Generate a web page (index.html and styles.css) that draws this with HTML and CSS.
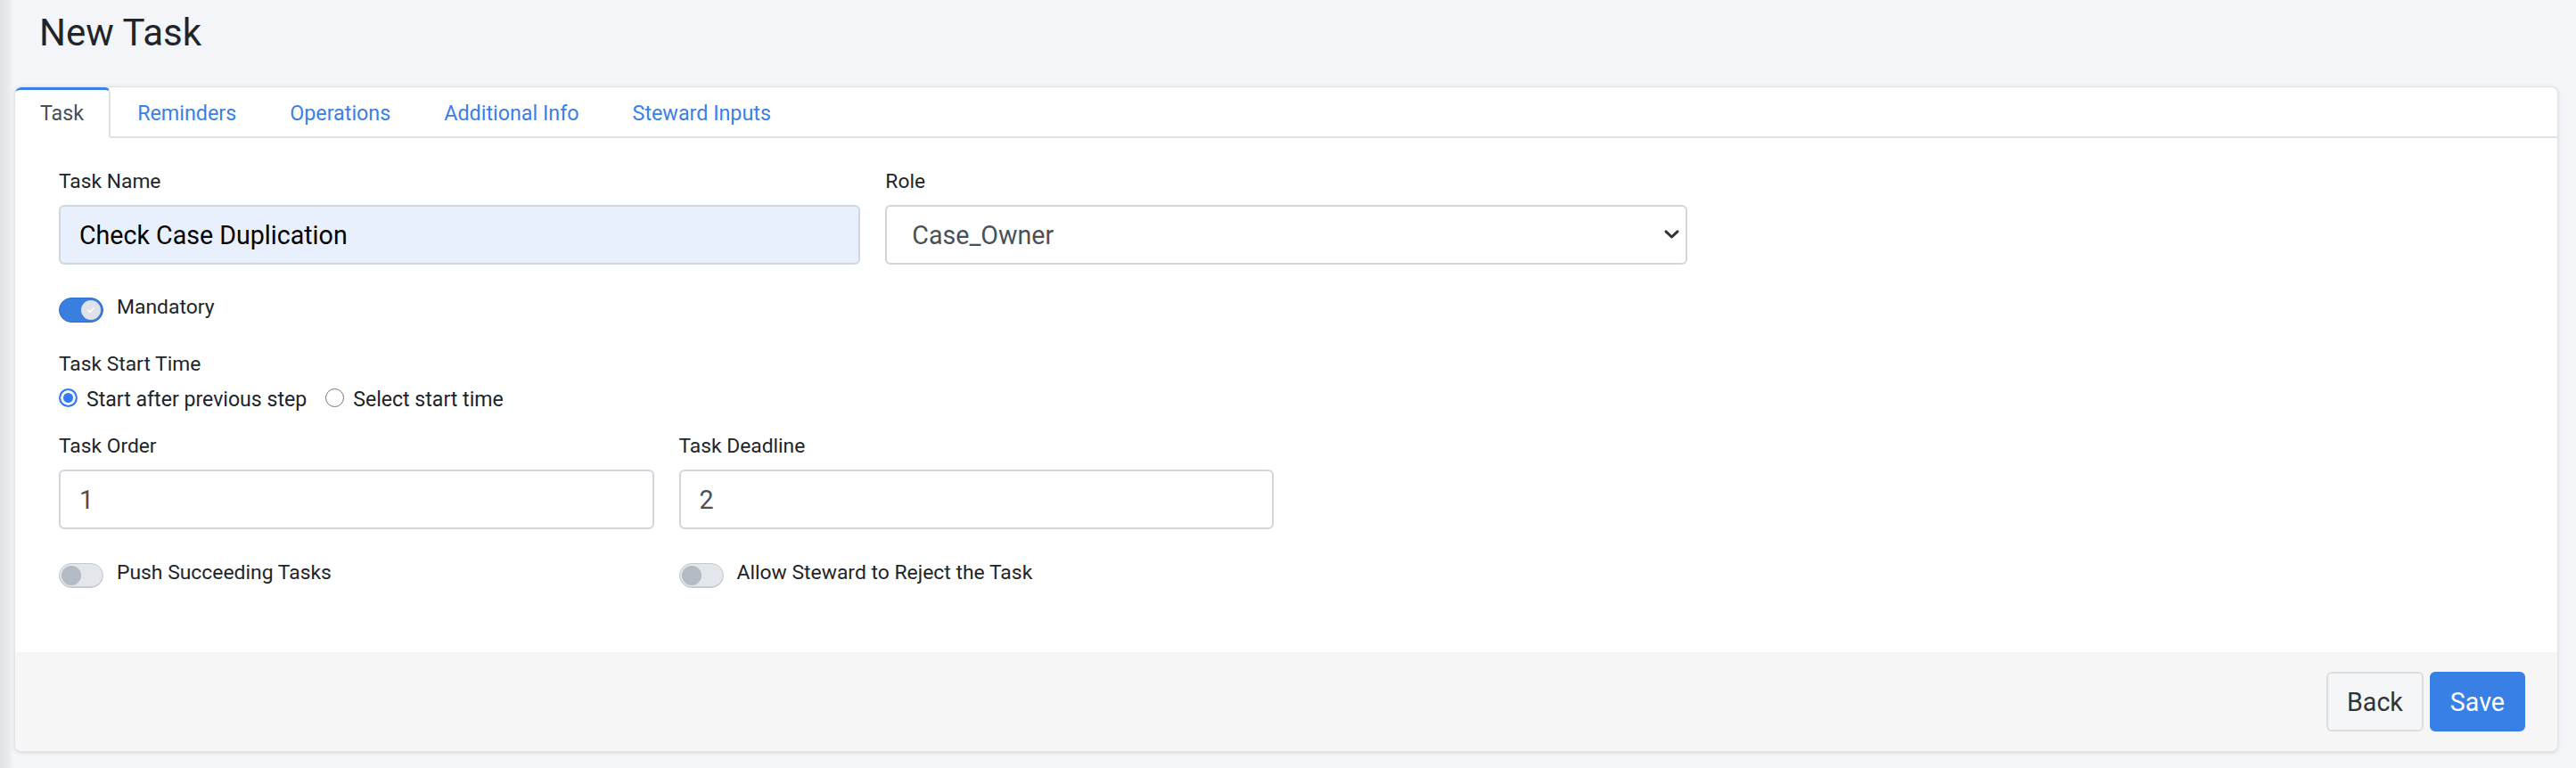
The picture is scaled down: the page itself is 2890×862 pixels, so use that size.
FILE: index.html
```html
<!DOCTYPE html>
<html lang="en">
<head>
<meta charset="utf-8">
<title>New Task</title>
<link rel="stylesheet" href="styles.css">
</head>
<body>
<div class="page">
  <h1 class="page-title">New Task</h1>
  <div class="card">
    <ul class="tabs">
      <li class="tab active">Task</li>
      <li class="tab">Reminders</li>
      <li class="tab">Operations</li>
      <li class="tab">Additional Info</li>
      <li class="tab">Steward Inputs</li>
    </ul>
    <div class="card-body">
      <div class="row">
        <div class="field span-4">
          <label class="label">Task Name</label>
          <input class="control autofill" type="text" value="Check Case Duplication">
        </div>
        <div class="field span-4">
          <label class="label">Role</label>
          <div class="select-wrap">
            <select class="control select"><option>Case_Owner</option></select>
            <svg class="chevron" width="19" height="12" viewBox="0 0 19 12"><path d="M3 2.8 L9.5 9 L16 2.8" fill="none" stroke="#333" stroke-width="3" stroke-linecap="round" stroke-linejoin="round"/></svg>
          </div>
        </div>
      </div>

      <div class="switch-row mandatory">
        <span class="switch on"><span class="knob"><svg width="12" height="12" viewBox="0 0 12 12"><path d="M3 6.3 L5.1 8.4 L9 3.8" fill="none" stroke="#ffffff" stroke-width="1.6" stroke-linecap="round" stroke-linejoin="round"/></svg></span></span>
        <span class="switch-label">Mandatory</span>
      </div>

      <div class="label start-label">Task Start Time</div>
      <div class="radios">
        <label class="radio-item"><input class="radio" type="radio" name="start" checked><span>Start after previous step</span></label>
        <label class="radio-item second"><input class="radio" type="radio" name="start"><span>Select start time</span></label>
      </div>

      <div class="row order-row">
        <div class="field span-3">
          <label class="label">Task Order</label>
          <input class="control" type="text" value="1">
        </div>
        <div class="field span-3">
          <label class="label">Task Deadline</label>
          <input class="control" type="text" value="2">
        </div>
      </div>

      <div class="row toggles-row">
        <div class="span-3 switch-row">
          <span class="switch off"><span class="knob"></span></span>
          <span class="switch-label">Push Succeeding Tasks</span>
        </div>
        <div class="span-3 switch-row">
          <span class="switch off"><span class="knob"></span></span>
          <span class="switch-label">Allow Steward to Reject the Task</span>
        </div>
      </div>
    </div>
    <div class="card-footer">
      <button class="btn btn-back" type="button">Back</button>
      <button class="btn btn-save" type="button">Save</button>
    </div>
  </div>
</div>
</body>
</html>
```

FILE: styles.css
```css
html, body {
  margin: 0;
  padding: 0;
}

body {
  width: 2890px;
  height: 862px;
  overflow: hidden;
  font-family: Roboto, "Liberation Sans", Arial, sans-serif;
  color: #212529;
  background: linear-gradient(to right, #e1e2e6 0px, #e9eaee 9px, #f4f5f9 15px, #f4f5f9 100%);
}

.page {
  padding: 12px 20px 0 16px;
}

.page-title {
  margin: 0 0 35px 0;
  padding-left: 28px;
  font-size: 42px;
  line-height: 50px;
  font-weight: 400;
  color: #212529;
}

.card {
  background: #ffffff;
  border: 1px solid #e2e4e8;
  border-radius: 8px;
  box-shadow: 0 1px 4px rgba(0, 0, 0, 0.12);
  overflow: hidden;
}

/* Tabs */
.tabs {
  display: flex;
  list-style: none;
  margin: 0;
  padding: 0;
  border-bottom: 2px solid #dee2e6;
}

.tab {
  height: 52px;
  line-height: 52px;
  padding: 0 28px;
  font-size: 23.3px;
  color: #3a80e6;
  border-top: 3px solid transparent;
  border-left: 2px solid transparent;
  border-right: 2px solid transparent;
  border-bottom: 2px solid transparent;
  margin-bottom: -2px;
  white-space: nowrap;
}

.tab.active {
  color: #495057;
  background: #ffffff;
  border-top-color: #3a80e6;
  border-right-color: #dee2e6;
  border-bottom-color: #ffffff;
  border-left-width: 0;
  border-top-left-radius: 6px;
  border-top-right-radius: 6px;
}

/* Body */
.card-body {
  padding: 32px 49px 72px 49px;
}

.row {
  display: grid;
  grid-template-columns: repeat(12, minmax(0, 1fr));
  column-gap: 28px;
}

.span-4 {
  grid-column: span 4;
}

.span-3 {
  grid-column: span 3;
}

.label {
  display: block;
  font-size: 22.8px;
  line-height: 33px;
  color: #212529;
}

.field .label {
  margin-bottom: 10px;
}

.control {
  display: block;
  width: 100%;
  height: 67px;
  box-sizing: border-box;
  border: 2px solid #d1d6dc;
  border-radius: 6px;
  padding: 0 21px;
  font-family: Roboto, "Liberation Sans", Arial, sans-serif;
  font-size: 28.6px;
  color: #495057;
  background: #ffffff;
  outline: none;
}

.control.autofill {
  background: #e8f0fe;
  color: #000000;
}

.select-wrap {
  position: relative;
}

.select {
  -webkit-appearance: none;
  appearance: none;
  padding-left: 28px;
}

.chevron {
  position: absolute;
  right: 8px;
  top: 27px;
}

/* Switches */
.switch-row {
  display: flex;
  align-items: flex-start;
}

.mandatory {
  margin-top: 31px;
}

.switch {
  flex-shrink: 0;
  width: 50px;
  height: 28px;
  margin-top: 6px;
  box-sizing: border-box;
  border-radius: 14px;
  padding: 2px;
  display: flex;
  align-items: center;
}

.switch .knob {
  width: 22px;
  height: 22px;
  border-radius: 50%;
  display: flex;
  align-items: center;
  justify-content: center;
}

.switch.on {
  background: #3a7fe0;
  border: 1px solid #2d6bc9;
  justify-content: flex-end;
}

.switch.on .knob {
  background: #dfe2e8;
}

.switch.off {
  background: #e3e6ea;
  border: 1px solid #c4c9d0;
  justify-content: flex-start;
  box-shadow: inset 0 -1px 0 #c9ced5;
}

.switch.off .knob {
  background: #b4bac3;
}

.switch-label {
  margin-left: 15px;
  font-size: 22.9px;
  line-height: 33px;
  color: #212529;
  white-space: nowrap;
}

/* Radios */
.start-label {
  margin-top: 30px;
}

.radios {
  display: flex;
  margin-top: 7px;
}

.radio-item {
  display: flex;
  align-items: flex-start;
  font-size: 23.1px;
  line-height: 33px;
  color: #212529;
}

.radio-item.second {
  margin-left: 21px;
}

.radio {
  -webkit-appearance: none;
  appearance: none;
  width: 21px;
  height: 21px;
  margin: 4px 10px 0 0;
  box-sizing: border-box;
  border-radius: 50%;
  border: 1.5px solid #767676;
  background: #ffffff;
  flex-shrink: 0;
}

.radio:checked {
  border: 2px solid #2f7cf6;
  background: #2f7cf6;
  box-shadow: inset 0 0 0 3px #ffffff;
}

.order-row {
  margin-top: 19px;
}

.toggles-row {
  margin-top: 32px;
}

/* Footer */
.card-footer {
  display: flex;
  justify-content: flex-end;
  gap: 7px;
  padding: 22px 36px 22px 36px;
  background: #f6f6f6;
}

.btn {
  height: 67px;
  box-sizing: border-box;
  padding: 0 21px;
  border-radius: 6px;
  font-family: Roboto, "Liberation Sans", Arial, sans-serif;
  font-size: 28.6px;
  cursor: pointer;
}

.btn-back {
  background: #f5f6f8;
  border: 2px solid #dddddd;
  color: #333333;
}

.btn-save {
  background: #3880e5;
  border: 2px solid #3880e5;
  color: #ffffff;
}
```
